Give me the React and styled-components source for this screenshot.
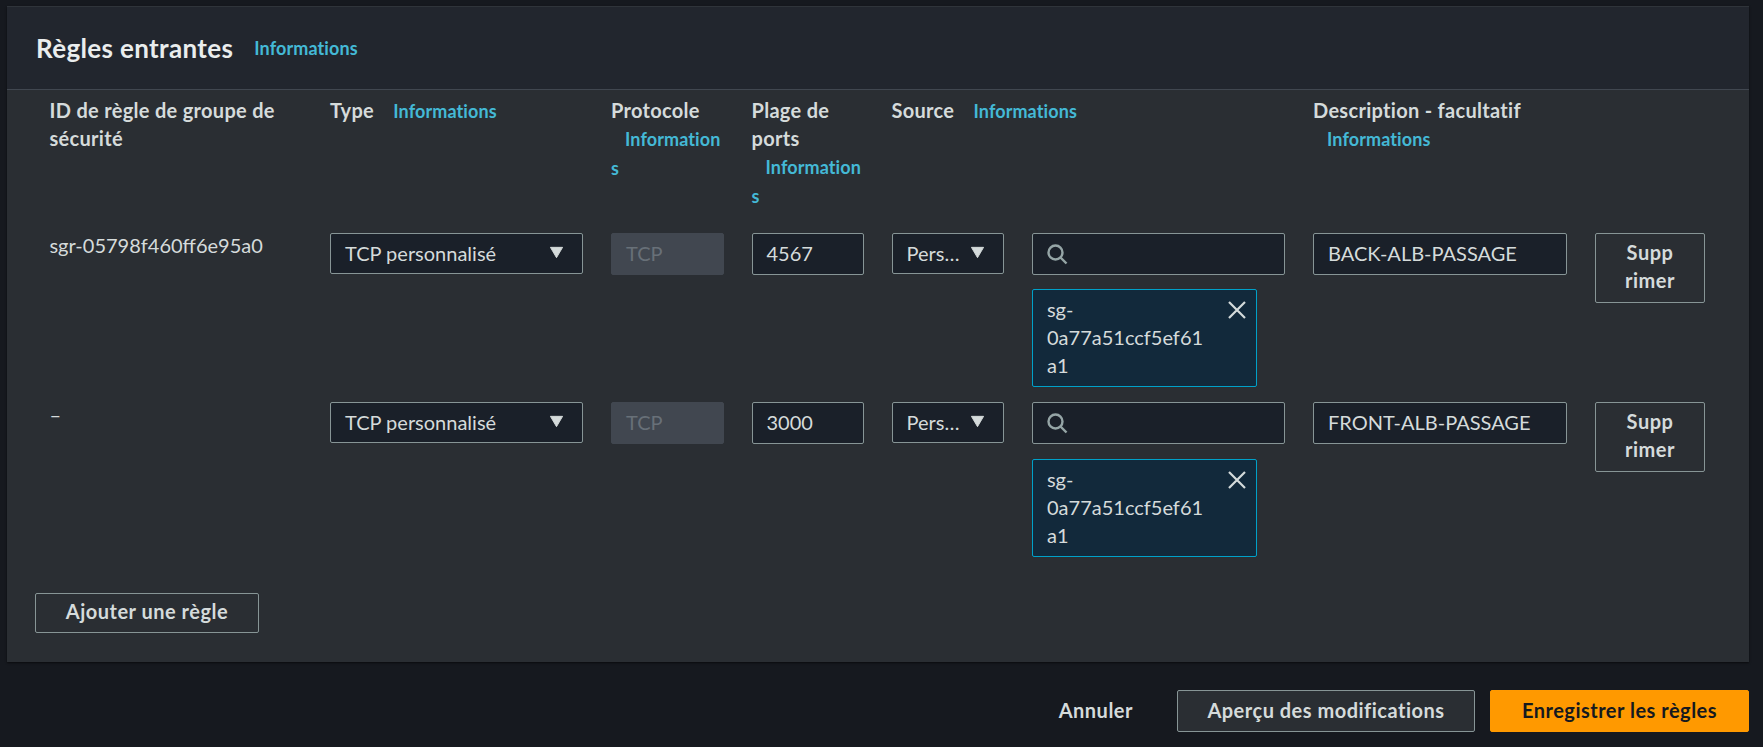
import React from "react";
import styled, { createGlobalStyle } from "styled-components";

const GlobalStyle = createGlobalStyle`
  html, body {
    margin: 0;
    padding: 0;
    background: #16191f;
    height: 100%;
  }
  body {
    font-family: Lato, "Noto Sans", "Liberation Sans", sans-serif;
    font-size: 20px;
    line-height: 28px;
    color: #d5dbdb;
    overflow: hidden;
  }
`;

const COLUMNS = "280.5px 281px 140.5px 140px 140.5px 281px 282px 141px";

const Page = styled.div`
  width: 1763px;
  height: 747px;
  padding: 6px 14px 0 7px;
  box-sizing: border-box;
`;
const Panel = styled.section`
  background: #2a2e33;
  height: 656px;
  box-shadow: 0 1px 2px rgba(0, 0, 0, 0.6);
  border-top: 1px solid #2f343a;
  box-sizing: border-box;
`;
const PanelHeader = styled.header`
  height: 83px;
  box-sizing: border-box;
  background: #22262e;
  border-bottom: 1px solid #414750;
  display: flex;
  align-items: center;
  padding: 0 29px;
  gap: 21px;
`;
const Title = styled.h2`
  margin: 0;
  font-size: 26px;
  font-weight: 700;
  letter-spacing: 0.35px;
  color: #eaeded;
`;
const InfoLink = styled.a`
  color: #44b9d6;
  font-size: 18px;
  font-weight: 700;
  letter-spacing: 0.1px;
  margin-left: ${(p) => p.$indent || 0}px;
`;
const Table = styled.div`
  padding: 6px 0 0 42.5px;
`;
const HeadRow = styled.div`
  display: grid;
  grid-template-columns: ${COLUMNS};
  height: 137px;
`;
const Row = styled.div`
  display: grid;
  grid-template-columns: ${COLUMNS};
  height: ${(p) => p.$h}px;
`;
const HeadCell = styled.div`
  font-weight: 700;
  letter-spacing: 0.3px;
  padding-right: 25px;
  grid-column: span ${(p) => p.$span || 1};
  color: #d5dbdb;
`;
const IdCell = styled.div`
  margin-top: -2px;
`;
const Cell = styled.div`
  padding-right: 28px;
  min-width: 0;
`;
const Field = styled.div`
  box-sizing: border-box;
  height: 42px;
  display: flex;
  align-items: center;
  justify-content: space-between;
  padding: 0 14px 2px;
  background: #1a2029;
  border: 1px solid #879596;
  border-radius: 2px;
  color: #d5dbdb;
  white-space: nowrap;
`;
const Disabled = styled(Field)`
  background: #414750;
  border-color: #414750;
  color: #687078;
`;
const SelectField = styled(Field)`
  height: 41px;
`;
const SmallSelect = styled(SelectField)`
  padding: 0 18px 2px 14px;
`;
const Arrow = styled.svg`
  width: 15px;
  height: 13px;
  flex: none;
  margin-right: ${(p) => p.$right ?? 4}px;
  fill: #d5dbdb;
`;
const SearchField = styled(Field)`
  justify-content: flex-start;
  padding-bottom: 0;
`;
const SearchIcon = styled.svg`
  width: 22px;
  height: 22px;
  margin-left: -1px;
  fill: none;
  stroke: #95a5a6;
  stroke-width: 2.4;
`;
const Chip = styled.div`
  box-sizing: border-box;
  position: relative;
  width: 225px;
  height: 98px;
  margin-top: 14.4px;
  padding: 5px 14px;
  background: #12293b;
  border: 1px solid #00a1c9;
  border-radius: 2px;
`;
const CloseIcon = styled.svg`
  position: absolute;
  top: 10px;
  right: 9px;
  width: 20px;
  height: 20px;
  stroke: #d5dbdb;
  stroke-width: 2.2;
`;
const OutlineButton = styled.button`
  font: inherit;
  font-weight: 700;
  letter-spacing: 0.5px;
  box-sizing: border-box;
  background: #2a2e33;
  color: #d5dbdb;
  border: 1px solid #879596;
  border-radius: 2px;
  padding: 4px 0 8px;
  width: ${(p) => p.$w}px;
`;
const AddButton = styled(OutlineButton)`
  padding: 3px 0 7px;
`;
const AddRow = styled.div`
  padding: 37px 0 0 28px;
`;
const Footer = styled.footer`
  display: flex;
  justify-content: flex-end;
  align-items: center;
  margin-top: 28px;
`;
const TextButton = styled.button`
  font: inherit;
  font-weight: 700;
  letter-spacing: 0.5px;
  background: none;
  border: none;
  color: #d5dbdb;
  padding: 0 0 2px;
  margin-right: 44px;
`;
const FooterButton = styled(OutlineButton)`
  height: 42px;
  padding: 0 0 2px;
  background: #2a2e33;
  margin-right: 15px;
`;
const PrimaryButton = styled(OutlineButton)`
  height: 42px;
  padding: 0 0 2px;
  background: #ff9900;
  border-color: #ff9900;
  color: #16191f;
`;

const DownArrow = ({ right }) => (
  <Arrow viewBox="0 0 16 13" $right={right}>
    <path d="M1.5 1h13L8 12z" stroke="#d5dbdb" strokeWidth="1" strokeLinejoin="round" />
  </Arrow>
);

const RuleRow = ({ id, port, description, height }) => (
  <Row $h={height}>
    <IdCell>{id}</IdCell>
    <Cell>
      <SelectField>
        TCP personnalisé
        <DownArrow />
      </SelectField>
    </Cell>
    <Cell>
      <Disabled>TCP</Disabled>
    </Cell>
    <Cell>
      <Field>{port}</Field>
    </Cell>
    <Cell>
      <SmallSelect>
        Pers…
        <DownArrow right={0} />
      </SmallSelect>
    </Cell>
    <Cell>
      <SearchField>
        <SearchIcon viewBox="0 0 22 22">
          <circle cx="9.5" cy="9.5" r="7" />
          <path d="M14.5 14.5l6 6" />
        </SearchIcon>
      </SearchField>
      <Chip>
        sg-
        <br />
        0a77a51ccf5ef61
        <br />
        a1
        <CloseIcon viewBox="0 0 20 20">
          <path d="M2 2l16 16M18 2L2 18" />
        </CloseIcon>
      </Chip>
    </Cell>
    <Cell>
      <Field>{description}</Field>
    </Cell>
    <div>
      <OutlineButton $w={110}>
        Supp
        <br />
        rimer
      </OutlineButton>
    </div>
  </Row>
);

export default function App() {
  return (
    <Page>
      <GlobalStyle />
      <Panel>
        <PanelHeader>
          <Title>Règles entrantes</Title>
          <InfoLink>Informations</InfoLink>
        </PanelHeader>
        <Table>
          <HeadRow>
            <HeadCell>ID de règle de groupe de sécurité</HeadCell>
            <HeadCell>
              Type <InfoLink $indent={14}>Informations</InfoLink>
            </HeadCell>
            <HeadCell>
              Protocole
              <br />
              <InfoLink $indent={14}>Information</InfoLink>
              <br />
              <InfoLink>s</InfoLink>
            </HeadCell>
            <HeadCell>
              Plage de
              <br />
              ports
              <br />
              <InfoLink $indent={14}>Information</InfoLink>
              <br />
              <InfoLink>s</InfoLink>
            </HeadCell>
            <HeadCell $span={2}>
              Source <InfoLink $indent={14}>Informations</InfoLink>
            </HeadCell>
            <HeadCell $span={2}>
              Description - facultatif
              <br />
              <InfoLink $indent={14}>Informations</InfoLink>
            </HeadCell>
          </HeadRow>
          <RuleRow id="sgr-05798f460ff6e95a0" port="4567" description="BACK-ALB-PASSAGE" height={169.4} />
          <RuleRow id="–" port="3000" description="FRONT-ALB-PASSAGE" height={153.6} />
        </Table>
        <AddRow>
          <AddButton $w={224}>Ajouter une règle</AddButton>
        </AddRow>
      </Panel>
      <Footer>
        <TextButton>Annuler</TextButton>
        <FooterButton $w={298}>Aperçu des modifications</FooterButton>
        <PrimaryButton $w={259}>Enregistrer les règles</PrimaryButton>
      </Footer>
    </Page>
  );
}
